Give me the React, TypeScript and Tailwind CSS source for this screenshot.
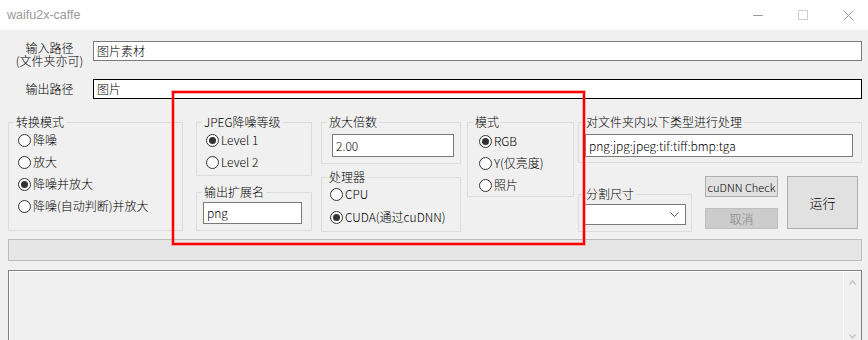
import React from 'react';

const FONT = { fontFamily: '"Noto Sans CJK SC", "Liberation Sans", sans-serif' };

interface RadioProps {
  label: string;
  checked?: boolean;
}

const Radio: React.FC<RadioProps> = ({ label, checked }) => (
  <div className="flex items-center h-[14px] leading-[14px] whitespace-nowrap">
    <span className="w-[13px] h-[13px] shrink-0 rounded-full border border-[#333333] bg-white flex items-center justify-center">
      {checked && <span className="w-[7px] h-[7px] rounded-full bg-[#333333]"></span>}
    </span>
    <span className="ml-[2px]">{label}</span>
  </div>
);

interface GroupProps {
  title: string;
  className?: string;
  inner?: string;
  children?: React.ReactNode;
}

// padding goes on the inner div, otherwise the legend moves with it
const Group: React.FC<GroupProps> = ({ title, className = '', inner = '', children }) => (
  <fieldset className={`border border-[#dcdcdc] ${className}`}>
    <legend className="ml-[5px] px-[2px] text-[12px] leading-[14px]">{title}</legend>
    <div className={inner}>{children}</div>
  </fieldset>
);

const TextBox: React.FC<{ value: string; className?: string; dark?: boolean }> = ({ value, className = '', dark }) => (
  <div className={`bg-white border ${dark ? 'border-black' : 'border-[#7a7a7a]'} flex items-center pl-[3px] text-[12px] leading-[14px] ${className}`}>
    {value}
  </div>
);

export default function App() {
  return (
    <div className="relative w-[868px] h-[340px] overflow-hidden bg-[#f0f0f0] text-black text-[12px] font-light" style={FONT}>
      {/* title bar */}
      <div className="h-[30px] bg-white flex items-center">
        <span className="pl-[7px] text-[12.5px] font-normal text-[#999999]" style={{ fontFamily: '"Liberation Sans", sans-serif' }}>waifu2x-caffe</span>
        <div className="ml-auto flex items-center gap-[35px] pr-[14px]">
          <svg width="10" height="10" viewBox="0 0 10 10"><path d="M0 5.5h10" stroke="#9a9a9a" strokeWidth="1" /></svg>
          <svg width="10" height="10" viewBox="0 0 10 10"><rect x="0.5" y="0.5" width="9" height="9" fill="none" stroke="#d0d0d0" strokeWidth="1" /></svg>
          <svg width="11" height="11" viewBox="0 0 11 11"><path d="M0.5 0.5l10 10M10.5 0.5l-10 10" stroke="#9a9a9a" strokeWidth="1" /></svg>
        </div>
      </div>

      <div className="pl-[8px] pr-[6px]">
        {/* paths */}
        <div className="flex items-start mt-[11px]">
          <div className="w-[85px] pr-[2px] text-center leading-[13px]">
            输入路径<br />(文件夹亦可)
          </div>
          <TextBox value="图片素材" className="flex-1 h-[20px]" />
        </div>
        <div className="flex items-center mt-[12px]">
          <div className="w-[85px] pr-[2px] text-center leading-[14px]">输出路径</div>
          <TextBox value="图片" dark className="flex-1 h-[20px]" />
        </div>

        {/* options */}
        <div className="flex items-start mt-[16px]">
          <Group title="转换模式" className="w-[175px] h-[116px]" inner="pl-[9px] pt-[4px] flex flex-col gap-[8px]">
            <Radio label="降噪" />
            <Radio label="放大" />
            <Radio label="降噪并放大" checked />
            <Radio label="降噪(自动判断)并放大" />
          </Group>

          <div className="ml-[13px] w-[116px] flex flex-col">
            <Group title="JPEG降噪等级" className="h-[61px]" inner="pl-[9px] pt-[4px] flex flex-col gap-[8px]">
              <Radio label="Level 1" checked />
              <Radio label="Level 2" />
            </Group>
            <Group title="输出扩展名" className="mt-[9px] h-[46px]" inner="pl-[6px] pt-[3px]">
              <TextBox value="png" className="w-[99px] h-[22px]" />
            </Group>
          </div>

          <div className="ml-[9px] w-[140px] flex flex-col">
            <Group title="放大倍数" className="h-[49px]" inner="pl-[10px] pt-[5px]">
              <TextBox value="2.00" className="w-[122px] h-[23px]" />
            </Group>
            <Group title="处理器" className="mt-[6px] h-[62px]" inner="pl-[8px] pt-[3px] flex flex-col gap-[9px]">
              <Radio label="CPU" />
              <Radio label="CUDA(通过cuDNN)" checked />
            </Group>
          </div>

          <Group title="模式" className="ml-[6px] w-[107px] h-[82px]" inner="pl-[11px] pt-[5px] flex flex-col gap-[8px]">
            <Radio label="RGB" checked />
            <Radio label="Y(仅亮度)" />
            <Radio label="照片" />
          </Group>

          <div className="ml-[4px] flex-1 flex flex-col">
            <Group title="对文件夹内以下类型进行处理" className="h-[48px]" inner="pl-[6px] pt-[5px]">
              <TextBox value="png:jpg:jpeg:tif:tiff:bmp:tga" className="w-[268px] h-[23px]" />
            </Group>
            <div className="flex items-start mt-[13px]">
              <Group title="分割尺寸" className="mt-[11px] w-[114px] h-[45px]" inner="pl-[5px] pt-[3px]">
                <div className="w-[102px] h-[21px] bg-white border border-[#7a7a7a] flex items-center justify-end pr-[6px]">
                  <svg width="9" height="5" viewBox="0 0 9 5"><path d="M0.5 0.5l4 4 4-4" fill="none" stroke="#555555" strokeWidth="1" /></svg>
                </div>
              </Group>
              <div className="ml-[13px] w-[73px] flex flex-col">
                <div className="h-[21px] bg-[#e1e1e1] border border-[#adadad] flex items-center justify-center leading-[14px] whitespace-nowrap text-[11px]">cuDNN Check</div>
                <div className="mt-[11px] h-[21px] bg-[#cccccc] border border-[#bfbfbf] text-[#838383] flex items-center justify-center leading-[14px]">取消</div>
              </div>
              <div className="ml-[9px] w-[71px] h-[53px] bg-[#e1e1e1] border border-[#adadad] flex items-center justify-center text-[13px]">运行</div>
            </div>
          </div>
        </div>

        {/* progress */}
        <div className="mt-[7px] h-[22px] bg-[#e6e6e6] border border-[#bcbcbc]"></div>

        {/* log */}
        <div className="mt-[9px] h-[80px] border border-[#828282] flex">
          <div className="flex-1 border-t border-l border-white"></div>
          <div className="w-[18px] border-l border-t border-white flex flex-col items-center justify-between pt-[8px] pb-[10px]">
            <svg width="7" height="5" viewBox="0 0 7 5"><path d="M0.5 4.5l3-3.5 3 3.5" fill="none" stroke="#c0c0c0" strokeWidth="1.2" /></svg>
            <svg width="7" height="5" viewBox="0 0 7 5"><path d="M0.5 0.5l3 3.5 3-3.5" fill="none" stroke="#c0c0c0" strokeWidth="1.2" /></svg>
          </div>
        </div>
      </div>

      {/* red annotation box */}
      <div className="absolute left-[172px] top-[91px] w-[413px] h-[154px] border-2 border-[#ff0000] shadow-[0_0_0_1px_rgba(255,90,90,0.45),inset_0_0_0_1px_rgba(255,90,90,0.45)] pointer-events-none"></div>
    </div>
  );
}
